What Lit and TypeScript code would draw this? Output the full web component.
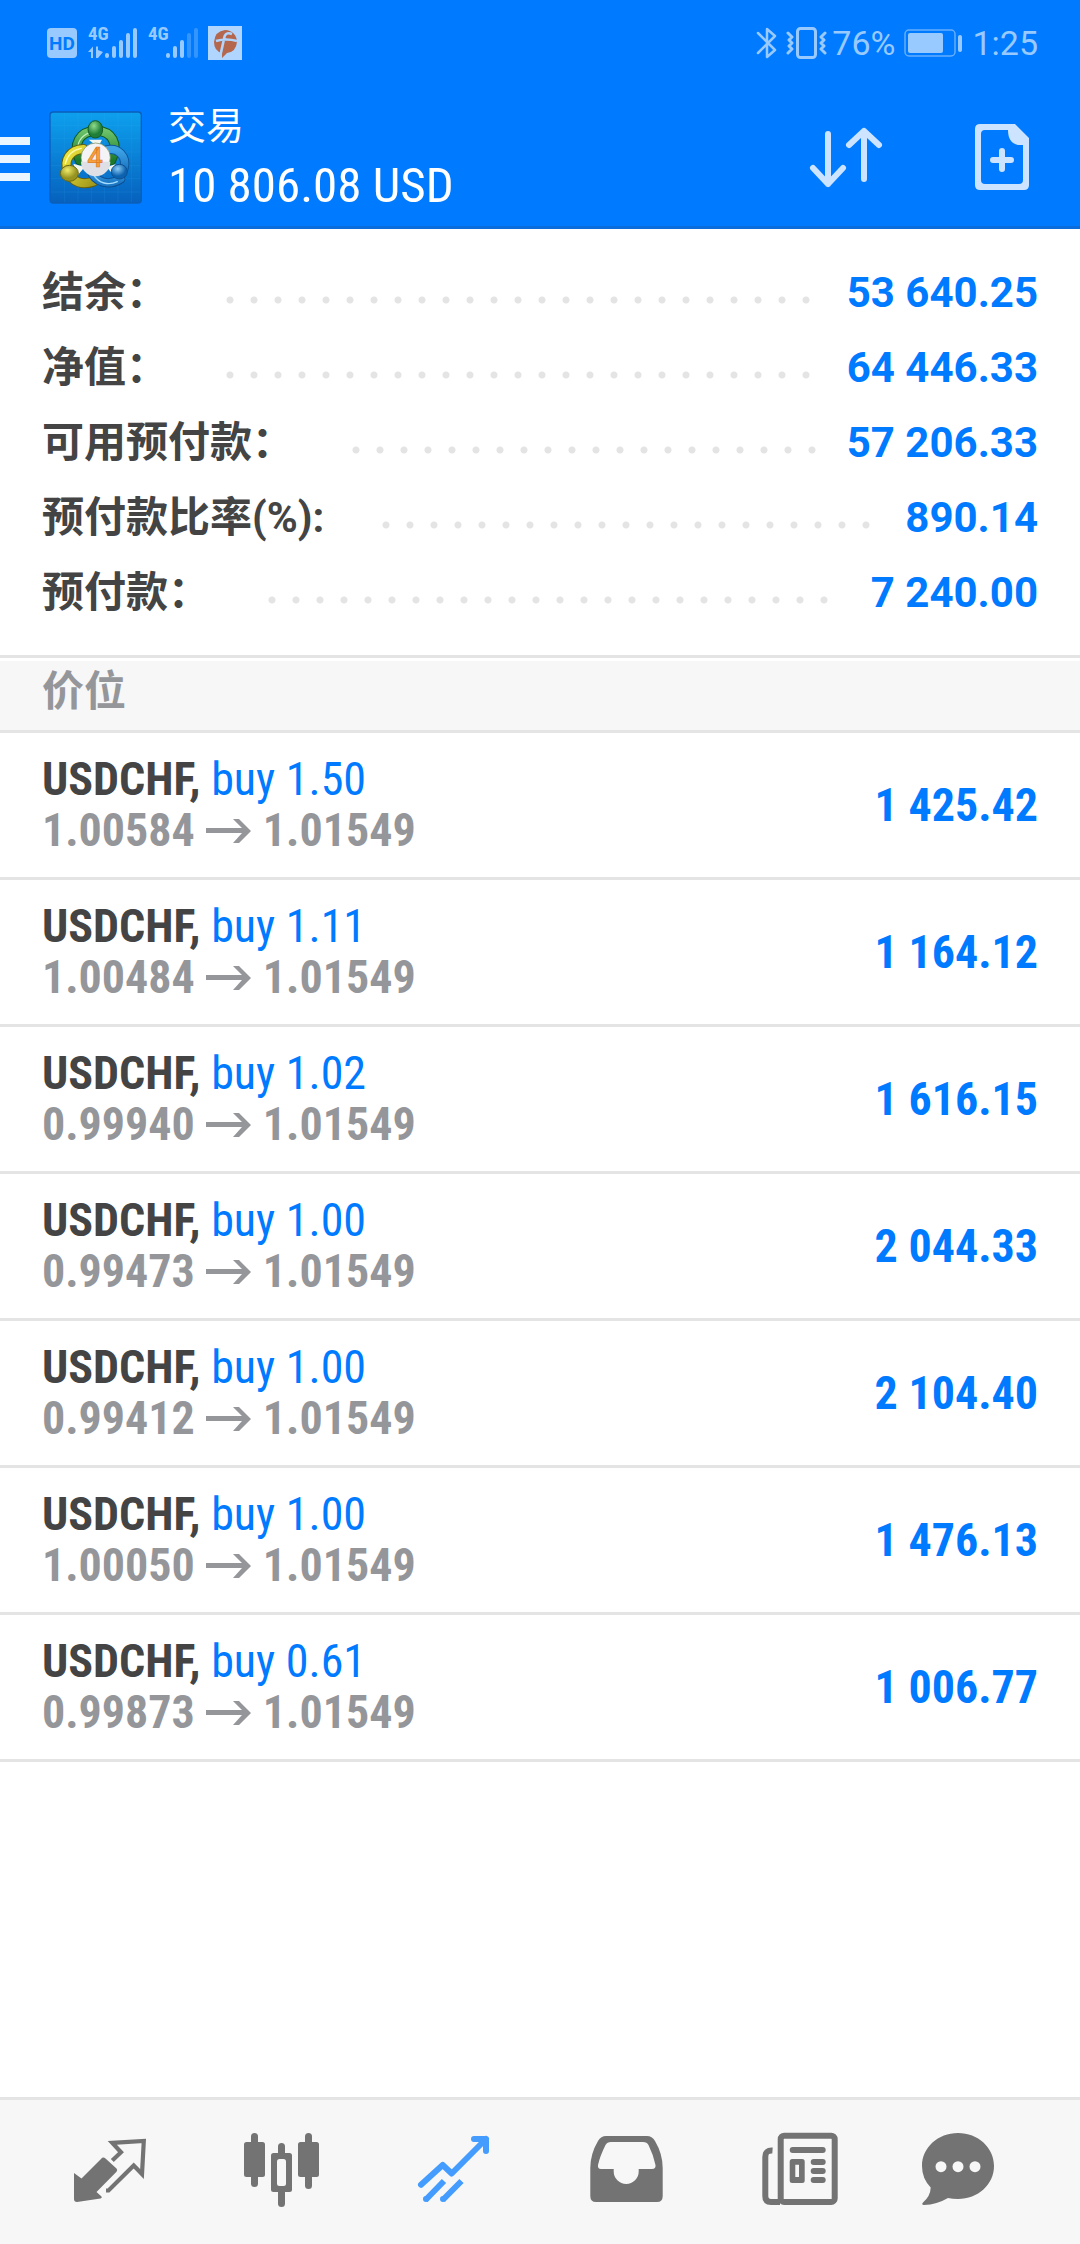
import { LitElement, html, css, svg, nothing } from "lit";
import { customElement, property } from "lit/decorators.js";

interface Position {
  symbol: string;
  side: string;
  volume: string;
  open: string;
  current: string;
  profit: string;
}

const SUMMARY: Array<[string, string]> = [
  ["结余：", "53 640.25"],
  ["净值：", "64 446.33"],
  ["可用预付款：", "57 206.33"],
  ["预付款比率(%):", "890.14"],
  ["预付款：", "7 240.00"],
];

const row = (volume: string, open: string, profit: string): Position => ({
  symbol: "USDCHF",
  side: "buy",
  volume,
  open,
  current: "1.01549",
  profit,
});

const POSITIONS: Position[] = [
  row("1.50", "1.00584", "1 425.42"),
  row("1.11", "1.00484", "1 164.12"),
  row("1.02", "0.99940", "1 616.15"),
  row("1.00", "0.99473", "2 044.33"),
  row("1.00", "0.99412", "2 104.40"),
  row("1.00", "1.00050", "1 476.13"),
  row("0.61", "0.99873", "1 006.77"),
];

const TAB_ICONS = {
  quotes: svg`
    <path fill="currentColor" d="M4 41L11.5 46.500L31 27Q33 24.500 35.500 26.500L46.500 36.500Q48 38 46.500 39.700L26.500 60L31.500 64.500Q32.500 66 30.500 66.500L7 70Q4 70 4 67Z"/>
    <path fill="none" stroke="currentColor" stroke-width="4.200" d="M42.300 28.500L51 20.200L42.300 10.900L73.800 9L72 42L63.700 33.500L38.500 58.500H36"/>`,
  charts: svg`
    <g fill="currentColor">
      <rect x="9" y="1" width="7" height="54" rx="3.500"/><rect x="2" y="10" width="21" height="35" rx="2.500"/>
      <rect x="36" y="11" width="7" height="64" rx="3.500"/>
      <rect x="63" y="1" width="7" height="56" rx="3.500"/><rect x="56" y="10" width="21" height="35" rx="2.500"/>
      <path fill-rule="evenodd" d="M31.500 21H47.500Q50 21 50 23.500V57.500Q50 60 47.500 60H31.500Q29 60 29 57.500V23.500Q29 21 31.500 21Z"/>
    </g>
    <rect x="35" y="27" width="9" height="27" rx="2.500" fill="#f7f7f7"/>`,
  trade: svg`
    <g fill="none" stroke="currentColor" stroke-width="6" stroke-linejoin="round">
      <path stroke-linecap="round" d="M7 52.700L28.700 33L37.700 41.500L72 7M60 7H72V19"/>
      <path d="M11.500 68L30 49M28.700 68L47.500 49"/>
    </g>
    <g fill="currentColor"><circle cx="12" cy="67" r="3"/><circle cx="29" cy="67" r="3"/></g>`,
  history: svg`
    <path fill="currentColor" fill-rule="evenodd" d="M20 4H61Q66 4 69 9Q76.700 22 76.700 36V64Q76.700 70 71 70H10Q4.300 70 4.300 64V36Q4.300 22 12 9Q15 4 20 4ZM25 10Q21 10 19.500 13Q14 24 12 33Q11.500 37 15 37H27.700V39.500A12.500 12.500 0 0 0 52.700 39.500V37H66Q70 37 69.500 33Q67 22 62.500 13Q61 10 57 10Z"/>`,
  news: svg`
    <g fill="none" stroke="currentColor" stroke-width="6">
      <rect x="22.700" y="3.700" width="54" height="66.300" rx="3.500"/>
      <path d="M14.500 18.500Q7.300 18 7.300 25V64Q7.300 70 13 70H22"/>
      <path stroke-linecap="round" d="M34.700 18H64.700M55.700 30H64.700M55.700 39H64.700M55.700 48H64.700"/>
    </g>
    <path fill="currentColor" fill-rule="evenodd" d="M34.200 27H44.200Q46.700 27 46.700 29.500V48.500Q46.700 51 44.200 51H34.200Q31.700 51 31.700 48.500V29.500Q31.700 27 34.200 27ZM37.300 32.700V45H41V32.700Z"/>`,
  chat: svg`
    <path fill="currentColor" d="M40 1C60 1 76 15.500 76 34S60 67 40 67Q34.500 67 30 66Q19 72.500 6 73Q3 72.500 5 70.500Q12.500 64 12.700 55.500Q4 46.500 4 34C4 15.500 20 1 40 1Z"/>
    <g fill="#f7f7f7"><circle cx="23" cy="34.700" r="5.500"/><circle cx="40" cy="34.700" r="5.500"/><circle cx="57" cy="34.700" r="5.500"/></g>`,
};

const TABS: Array<{ id: keyof typeof TAB_ICONS; label: string }> = [
  { id: "quotes", label: "行情" },
  { id: "charts", label: "图表" },
  { id: "trade", label: "交易" },
  { id: "history", label: "历史" },
  { id: "news", label: "新闻" },
  { id: "chat", label: "消息" },
];

const fonts = css`
  :host {
    --wide: Roboto, "Noto Sans CJK SC", sans-serif;
    --narrow: "Roboto Condensed", "Liberation Sans Narrow", Roboto, "Noto Sans CJK SC", sans-serif;
    --blue: #007aff;
    --line: #e4e4e4;
  }
  * {
    box-sizing: border-box;
  }
  svg {
    display: block;
    flex: none;
  }
`;

@customElement("status-bar")
class StatusBar extends LitElement {
  static styles = [
    fonts,
    css`
      :host {
        display: flex;
        justify-content: space-between;
        align-items: center;
        height: 88px;
        padding: 0 42px 2px 47px;
        color: #99caff;
        font: 400 34px/40px var(--wide);
      }
      .group {
        display: flex;
        align-items: center;
      }
      .left {
        gap: 10px;
      }
      .power {
        margin: 0 9px 0 9px;
      }
      .vibrate {
        margin: 0 5px 0 9px;
      }
    `,
  ];

  render() {
    return html`
      <div class="group left">
        <svg width="31" height="34" viewBox="0 0 31 34">
          <rect x="0" y="2" width="30" height="30" rx="4" fill="#99caff" />
          <text x="15" y="24" text-anchor="middle" font-family="Roboto" font-weight="700" font-size="19" fill="#007aff">HD</text>
        </svg>
        <svg width="50" height="42" viewBox="0 -4 50 42">
          <text x="0" y="14" font-family="Roboto Condensed, Liberation Sans Narrow, Roboto" font-weight="700" font-size="19" fill="#99caff">4G</text>
          <path d="M0 26L5 20.500V32H3V26ZM8 20.500H10V24L15 26L10 32H8Z" fill="#99caff" />
          <g stroke="#99caff" stroke-width="4" stroke-linecap="round">
            <path d="M19 29V30M26 22V30M33 16V30M40 9V30M47 4V30" />
          </g>
        </svg>
        <svg width="50" height="42" viewBox="0 -4 50 42">
          <text x="0" y="14" font-family="Roboto Condensed, Liberation Sans Narrow, Roboto" font-weight="700" font-size="19" fill="#99caff">4G</text>
          <g stroke="#99caff" stroke-width="4" stroke-linecap="round">
            <path d="M20 29V30M27 22V30M34 16V30" />
            <path d="M41 9V30M48 4V30" stroke="#3395ff" />
          </g>
        </svg>
        <svg width="34" height="34" viewBox="0 0 34 34">
          <rect width="34" height="34" fill="#b0d5ff" />
          <path d="M17 4C24 4 29 9 29 16Q28 26 19 27L14 32V27Q6 25 6 16Q7 5 17 4Z" fill="#b4674c" />
          <path d="M24 8Q17 5 16 13L12 31M8 15Q18 12 29 15" fill="none" stroke="#b0d5ff" stroke-width="2.600" />
        </svg>
      </div>
      <div class="group">
        <svg width="21" height="34" viewBox="0 0 21 34">
          <path d="M2 7L19 24L11 31V3L19 10L2 27" fill="none" stroke="#99caff" stroke-width="2.500" stroke-linejoin="round" stroke-linecap="round" />
        </svg>
        <svg class="vibrate" width="41" height="34" viewBox="0 0 41 34">
          <g fill="none" stroke="#99caff" stroke-width="3" stroke-linecap="round" stroke-linejoin="round">
            <rect x="11.500" y="2.500" width="18" height="29" rx="3" />
            <path d="M2 7L6 11L3 14L6 17L3 20L6 23L2 27M39 7L35 11L38 14L35 17L38 20L35 23L39 27" />
          </g>
        </svg>
        <span>76%</span>
        <svg class="power" width="59" height="34" viewBox="0 0 59 34">
          <rect x="1" y="4" width="50" height="26" rx="4" fill="none" stroke="#66afff" stroke-width="1.500" />
          <rect x="4" y="7" width="35" height="20" rx="2" fill="#99caff" />
          <rect x="54" y="9" width="4" height="17" rx="2" fill="#99caff" />
        </svg>
        <span>1:25</span>
      </div>
    `;
  }
}

@customElement("account-header")
class AccountHeader extends LitElement {
  static styles = [
    fonts,
    css`
      :host {
        display: flex;
        align-items: center;
        height: 141px;
        padding-right: 48px;
        border-bottom: 3px solid #0b6cdb;
        color: #fff;
      }
      button {
        padding: 0;
        border: 0;
        background: none;
        color: #cce4ff;
      }
      .menu {
        padding-top: 4px;
      }
      .logo {
        margin: 0 26px 0 19px;
      }
      .titles {
        flex: 1;
      }
      h1,
      p {
        margin: 0;
        font-weight: 400;
        white-space: nowrap;
      }
      h1 {
        font: 400 38px/58px "Noto Sans CJK SC", sans-serif;
      }
      p {
        font: 400 49px/68px var(--narrow);
      }
      .actions {
        display: flex;
        gap: 86px;
      }
    `,
  ];

  render() {
    return html`
      <button class="menu" aria-label="菜单">
        <svg width="30" height="44" viewBox="0 0 30 44">
          <path d="M0 0H30V8H0ZM0 18H30V26H0ZM0 36H30V44H0Z" fill="#eaf6ff" />
        </svg>
      </button>
      <svg class="logo" width="93" height="93" viewBox="27 32 279 279">
        <defs>
          <linearGradient id="tile" x1="0" y1="0" x2="0" y2="1">
            <stop offset="0" stop-color="#0da0ee" /><stop offset="1" stop-color="#0661bd" />
          </linearGradient>
          <linearGradient id="green" x1="0" y1="0" x2="0" y2="1">
            <stop offset="0" stop-color="#6cc36a" /><stop offset="1" stop-color="#1d7a2c" />
          </linearGradient>
          <linearGradient id="gold" x1="0" y1="0" x2="1" y2="1">
            <stop offset="0" stop-color="#f2ea3c" /><stop offset="1" stop-color="#a3991c" />
          </linearGradient>
          <linearGradient id="azure" x1="0" y1="0" x2="0" y2="1">
            <stop offset="0" stop-color="#3fa4e6" /><stop offset="1" stop-color="#1c77c4" />
          </linearGradient>
          <radialGradient id="greenHead" cx=".4" cy=".3"><stop offset="0" stop-color="#8fdc8c" /><stop offset="1" stop-color="#1f7f38" /></radialGradient>
          <radialGradient id="goldHead" cx=".4" cy=".3"><stop offset="0" stop-color="#f0ec6a" /><stop offset="1" stop-color="#979321" /></radialGradient>
          <radialGradient id="azureHead" cx=".4" cy=".3"><stop offset="0" stop-color="#8ccdf5" /><stop offset="1" stop-color="#0d62b0" /></radialGradient>
        </defs>
        <rect x="30" y="35" width="274" height="273" rx="10" fill="url(#tile)" stroke="#0b5fb8" stroke-width="4" />
        <path d="M74 38V306M114 38V306M154 38V306M194 38V306M234 38V306M274 38V306M32 75H302M32 115H302M32 155H302M32 195H302M32 235H302M32 275H302" stroke="#3fb0f5" stroke-opacity=".2" stroke-width="2" />
        <g stroke-linecap="round" fill="none">
          <path d="M119 180C96 130 120 92 168 91C216 92 238 130 214 180" stroke="#12591f" stroke-width="30" />
          <path d="M119 180C96 130 120 92 168 91C216 92 238 130 214 180" stroke="url(#green)" stroke-width="24" />
          <path d="M114 150C110 120 132 98 158 96" stroke="#c4efbd" stroke-width="4" />
          <path d="M196 150C235 138 262 170 252 205" stroke="#0d569b" stroke-width="28" />
          <path d="M196 150C235 138 262 170 252 205" stroke="url(#azure)" stroke-width="22" />
          <path d="M130 146C90 148 70 180 84 212C98 250 130 254 160 244" stroke="#645f10" stroke-width="30" />
          <path d="M130 146C90 148 70 180 84 212C98 250 130 254 160 244" stroke="url(#gold)" stroke-width="24" />
          <path d="M76 190C82 164 100 148 124 144" stroke="#fbf9b0" stroke-width="4" />
          <path d="M152 208C164 248 208 258 242 236" stroke="#0d4f92" stroke-width="28" />
          <path d="M152 208C164 248 208 258 242 236" stroke="url(#azure)" stroke-width="22" />
          <path d="M160 222C176 250 206 256 232 244" stroke="#a5dcff" stroke-width="4" />
        </g>
        <path d="M146 118L186 118L174 140ZM100 190L134 200L112 226ZM200 200L226 192L222 226Z" fill="#f2f6ee" />
        <ellipse cx="166" cy="87" rx="22" ry="26" fill="url(#greenHead)" stroke="#145c22" stroke-width="3" />
        <ellipse cx="88" cy="219" rx="27" ry="24" fill="url(#goldHead)" stroke="#6b6712" stroke-width="3" />
        <ellipse cx="238" cy="214" rx="24" ry="22" fill="url(#azureHead)" stroke="#0c4f90" stroke-width="3" />
        <circle cx="167" cy="172" r="44" fill="#f4f4f6" stroke="#6f8450" stroke-width="2" />
        <path d="M123 184H211A44 44 0 0 1 123 184Z" fill="#dfe0e6" />
        <text x="165" y="201" text-anchor="middle" font-family="Roboto" font-weight="500" font-size="82" fill="#f7a13d" stroke="#e07a20" stroke-width="2">4</text>
      </svg>
      <div class="titles">
        <h1>交易</h1>
        <p>10 806.08 USD</p>
      </div>
      <div class="actions">
        <button aria-label="排序">
          <svg width="80" height="68" viewBox="0 0 80 68">
            <path d="M22 11V61M7 45L22 61L37 45M58 56V8M43 22L58 8L73 22" fill="none" stroke="currentColor" stroke-width="6" stroke-linecap="round" stroke-linejoin="round" />
          </svg>
        </button>
        <button aria-label="新订单">
          <svg width="60" height="68" viewBox="0 0 60 68">
            <path fill="currentColor" fill-rule="evenodd" d="M8 1H43L57 15V62Q57 67 52 67H8Q3 67 3 62V6Q3 1 8 1ZM13 7Q9 7 9 11V57Q9 61 13 61H47Q51 61 51 57V22H46Q36 20 36 7Z" />
            <path d="M30 28V46M21 37H39" stroke="currentColor" stroke-width="6" stroke-linecap="round" />
          </svg>
        </button>
      </div>
    `;
  }
}

@customElement("account-summary")
class AccountSummary extends LitElement {
  static styles = [
    fonts,
    css`
      :host {
        display: block;
        padding: 26px 42px 25px;
        font: 700 42px/75px var(--wide);
      }
      dl,
      dd {
        margin: 0;
      }
      .line {
        display: flex;
        align-items: center;
      }
      dt {
        color: #444;
      }
      dd {
        color: var(--blue);
      }
      .dots {
        flex: 1;
        height: 8px;
        margin: 14px 28px 0 58px;
        background: radial-gradient(circle at 4px 4px, #e4e4e4 3px, transparent 4px) 0 0 / 24px 8px repeat-x;
      }
    `,
  ];

  render() {
    return html`<dl>
      ${SUMMARY.map(
        ([label, value]) => html`<div class="line">
          <dt>${label}</dt>
          <span class="dots"></span>
          <dd>${value}</dd>
        </div>`,
      )}
    </dl>`;
  }
}

@customElement("position-list")
class PositionList extends LitElement {
  @property({ attribute: false }) positions: Position[] = [];

  static styles = [
    fonts,
    css`
      :host {
        display: block;
        border-top: 3px solid var(--line);
        padding-top: 3px;
      }
      h2 {
        height: 72px;
        margin: 0;
        padding: 0 42px;
        border-bottom: 3px solid var(--line);
        background: #f7f7f7;
        color: #95969a;
        font: 700 42px/62px var(--wide);
      }
      ul {
        margin: 0;
        padding: 0;
        list-style: none;
      }
      li {
        display: flex;
        align-items: center;
        justify-content: space-between;
        padding: 21px 42px;
        border-bottom: 3px solid var(--line);
        font: 700 46px/51px var(--narrow);
      }
      .symbol {
        color: #444;
      }
      .order {
        color: var(--blue);
        font-weight: 400;
      }
      .prices {
        display: flex;
        align-items: center;
        gap: 11px;
        color: #95969a;
      }
      .profit {
        color: var(--blue);
      }
    `,
  ];

  render() {
    return html`
      <h2>价位</h2>
      <ul>
        ${this.positions.map(
          (p) => html`<li>
            <div>
              <div><span class="symbol">${p.symbol},</span> <span class="order">${p.side} ${p.volume}</span></div>
              <div class="prices">
                <span>${p.open}</span>
                <svg width="46" height="26" viewBox="0 0 46 26" role="img" aria-label="→">
                  <path d="M0 10H36L27 1H33L45 13L33 25H27L36 15H0Z" fill="currentColor" />
                </svg>
                <span>${p.current}</span>
              </div>
            </div>
            <div class="profit">${p.profit}</div>
          </li>`,
        )}
      </ul>
    `;
  }
}

@customElement("tab-bar")
class TabBar extends LitElement {
  @property() active = "";

  static styles = [
    fonts,
    css`
      nav {
        display: grid;
        grid-template-columns: repeat(5, 172fr) 148fr;
        height: 147px;
        padding: 0 48px 0 24px;
        border-top: 3px solid var(--line);
        background: #f7f7f7;
      }
      button {
        display: grid;
        place-items: center;
        padding: 0;
        border: 0;
        background: none;
        color: #737373;
      }
      button[aria-current] {
        color: #449cff;
      }
    `,
  ];

  render() {
    return html`<nav>
      ${TABS.map(
        (t) => html`<button aria-label=${t.label} aria-current=${t.id === this.active ? "page" : nothing}>
          <svg width="80" height="80" viewBox="0 0 80 80">${TAB_ICONS[t.id]}</svg>
        </button>`,
      )}
    </nav>`;
  }
}

@customElement("app-root")
class AppRoot extends LitElement {
  static styles = [
    fonts,
    css`
      :host {
        display: flex;
        flex-direction: column;
        min-height: 100vh;
        background: #fff;
      }
      header {
        background: var(--blue);
      }
      main {
        flex: 1;
      }
    `,
  ];

  render() {
    return html`
      <header>
        <status-bar></status-bar>
        <account-header></account-header>
      </header>
      <main>
        <account-summary></account-summary>
        <position-list .positions=${POSITIONS}></position-list>
      </main>
      <tab-bar active="trade"></tab-bar>
    `;
  }
}
